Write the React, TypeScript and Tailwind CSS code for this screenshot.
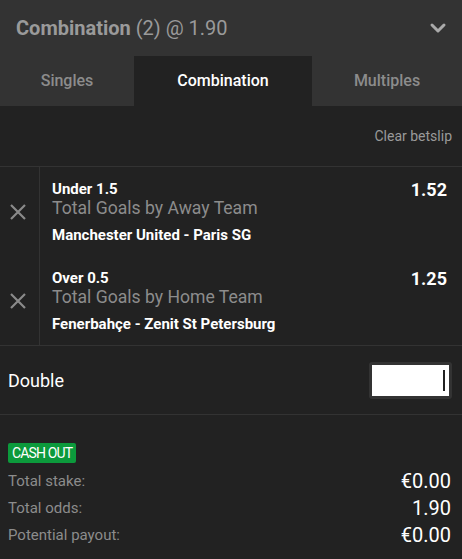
import { ChevronDown } from "lucide-react";

const bets = [
  {
    pick: "Under 1.5",
    market: "Total Goals by Away Team",
    match: "Manchester United - Paris SG",
    odds: "1.52",
  },
  {
    pick: "Over 0.5",
    market: "Total Goals by Home Team",
    match: "Fenerbahçe - Zenit St Petersburg",
    odds: "1.25",
  },
];

function CloseIcon() {
  return (
    <svg width="18" height="18" viewBox="0 0 18 18" className="text-[#8a8a8a]">
      <path d="M2 2 L16 16 M16 2 L2 16" stroke="currentColor" strokeWidth="2.2" />
    </svg>
  );
}

export default function App() {
  return (
    <div className="w-[462px] h-[559px] bg-[#222222] font-['Roboto',sans-serif] overflow-hidden">
      <div className="bg-[#333333]">
        <div className="h-[56px] flex items-center justify-between pl-4 pr-3">
          <div className="text-[20px] text-[#9a9a9a] leading-none">
            <span className="font-bold">Combination</span> (2) @ 1.90
          </div>
          <ChevronDown className="w-6 h-6 text-[#aaaaaa]" strokeWidth={3} />
        </div>
        <div className="flex h-[50px] text-[16px]">
          <button className="w-[134px] text-[#8c8c8c] font-medium">Singles</button>
          <button className="w-[178px] bg-[#222222] text-white font-medium">Combination</button>
          <button className="flex-1 text-[#8c8c8c] font-medium">Multiples</button>
        </div>
      </div>

      <div className="h-[60px] flex items-center justify-end pr-[10px] text-[14px] text-[#9a9a9a]">
        Clear betslip
      </div>

      <div className="border-t border-b border-[#333333]">
        {bets.map((bet) => (
          <div key={bet.pick} className="flex h-[89px]">
            <div className="w-[40px] border-r border-[#333333] flex items-center pl-[9px]">
              <CloseIcon />
            </div>
            <div className="flex-1 pl-3 pr-[15px] pt-[13px] flex justify-between">
              <div>
                <div className="text-[15px] font-bold text-white leading-[18px]">{bet.pick}</div>
                <div className="text-[17.6px] text-[#8c8c8c] leading-[20px]">{bet.market}</div>
                <div className="text-[15px] font-bold text-white leading-[18px] mt-[8px]">
                  {bet.match}
                </div>
              </div>
              <div className="text-[18px] font-bold text-white leading-[18px] pt-[1px]">
                {bet.odds}
              </div>
            </div>
          </div>
        ))}
      </div>

      <div className="h-[69px] flex items-center justify-between pl-2 pr-[10px] border-b border-[#333333]">
        <span className="text-[18px] text-white">Double</span>
        <div className="w-[83px] h-[37px] rounded-[3px] bg-[#333333] p-[3px]">
          <div className="w-full h-full bg-white flex items-center justify-end pr-[4px]">
            <div className="w-[2px] h-[21px] bg-[#222222]" />
          </div>
        </div>
      </div>

      <div className="px-2 pt-[26px]">
        <span className="inline-block bg-[#0c9a3c] text-white text-[14px] tracking-[-0.06em] leading-[20px] px-1 rounded-[2px]">
          CASH OUT
        </span>
        <div className="mt-[6px] flex flex-col gap-[7px] pr-[3px]">
          <div className="flex justify-between items-center h-[20px]">
            <span className="text-[15px] text-[#8c8c8c]">Total stake:</span>
            <span className="text-[20px] text-white">€0.00</span>
          </div>
          <div className="flex justify-between items-center h-[20px]">
            <span className="text-[15px] text-[#8c8c8c]">Total odds:</span>
            <span className="text-[20px] text-white">1.90</span>
          </div>
          <div className="flex justify-between items-center h-[20px]">
            <span className="text-[15px] text-[#8c8c8c]">Potential payout:</span>
            <span className="text-[20px] text-white">€0.00</span>
          </div>
        </div>
      </div>
    </div>
  );
}
